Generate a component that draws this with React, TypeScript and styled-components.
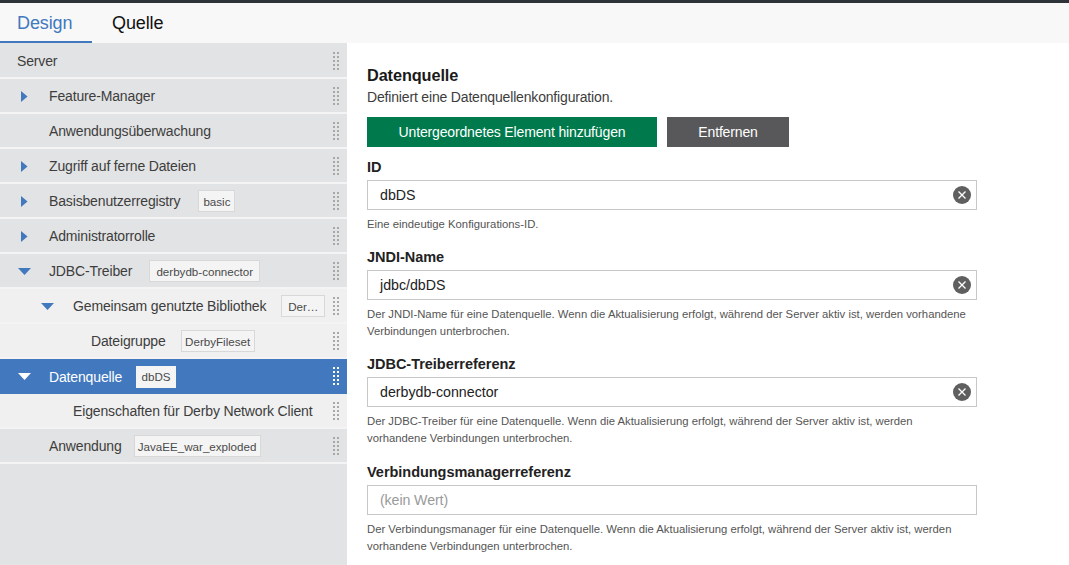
import React from "react";
import styled, { createGlobalStyle } from "styled-components";

const Global = createGlobalStyle`
  html, body { margin: 0; padding: 0; height: 565px; overflow: hidden; background: #fff; }
  body { font-family: "Liberation Sans", Arial, sans-serif; }
  * { box-sizing: border-box; }
`;
const Page = styled.div`
  width: 1069px; height: 565px; display: flex; flex-direction: column; overflow: hidden;
  border-top: 3px solid #2d3339;
`;
const TabBar = styled.div`
  height: 40px; flex: none; display: flex; background: #f8f8f8;
`;
const Tab = styled.div<{ $active?: boolean }>`
  height: 40px; width: ${p => (p.$active ? 92 : 91)}px; padding-left: ${p => (p.$active ? 17 : 20)}px; padding-top: 8px;
  font-size: 18px; line-height: 24px; letter-spacing: -0.12px; color: ${p => (p.$active ? "#4178be" : "#111")};
  border-bottom: 2px solid ${p => (p.$active ? "#4178be" : "transparent")};
`;
const Body = styled.div`
  flex: 1; display: flex; min-height: 0;
`;
const Sidebar = styled.div`
  width: 347px; flex: none; background: #e2e3e4; display: flex; flex-direction: column; padding-top: 1px;
`;
const Row = styled.div<{ $light?: boolean; $selected?: boolean; $indent: number }>`
  height: 35px; flex: none; display: flex; align-items: center; position: relative;
  padding-left: ${p => p.$indent}px; padding-top: ${p => (p.$selected ? 0 : 1)}px;
  font-size: 14px; letter-spacing: -0.15px;
  color: ${p => (p.$selected ? "#fff" : "#3d3d3d")};
  background: ${p => (p.$selected ? "#4178be" : p.$light ? "#f0f0f0" : "#e2e3e4")};
  border-bottom: ${p => (p.$selected ? "0" : "2px solid #f4f4f4")};
`;
const Caret = styled.svg<{ $left: number }>`
  position: absolute; left: ${p => p.$left}px; top: 10px;
`;
const Tag = styled.span<{ $selected?: boolean; $w: number; $ml: number }>`
  margin-left: ${p => p.$ml}px; width: ${p => p.$w}px; height: 22px; display: inline-flex; align-items: center; justify-content: center;
  font-size: 11.6px; letter-spacing: 0; color: #4a4a4a; background: #f4f4f4;
  border: 1px solid ${p => (p.$selected ? "#f4f4f4" : "#d8d8d8")};
  white-space: nowrap;
`;
const Grip = styled.svg`
  position: absolute; right: 8px; top: 8px;
`;
const Main = styled.div`
  flex: 1; padding: 22px 0 0 20px; background: #fff; min-width: 0;
`;
const Title = styled.div`
  font-size: 16.3px; line-height: 20px; font-weight: 700; color: #1a1a1a; letter-spacing: -0.1px;
`;
const Subtitle = styled.div`
  font-size: 14px; line-height: 18px; margin-top: 3px; color: #3d3d3d; letter-spacing: -0.17px;
`;
const Actions = styled.div`
  display: flex; gap: 10px; margin-top: 11px;
`;
const Button = styled.div<{ $w: number; $bg: string }>`
  width: ${p => p.$w}px; height: 30px; background: ${p => p.$bg}; color: #fff;
  display: flex; align-items: center; justify-content: center;
  font-size: 14px; letter-spacing: -0.15px;
`;
const Field = styled.div<{ $gap: number }>`
  width: 610px; margin-top: ${p => p.$gap}px;
`;
const Label = styled.div`
  font-size: 14.5px; line-height: 18px; font-weight: 700; color: #222; letter-spacing: -0.03px;
`;
const InputBox = styled.div<{ $empty?: boolean }>`
  height: 30px; margin-top: 4px; border: 1px solid #c7c7c7; background: #fff; position: relative;
  padding-left: 12px; display: flex; align-items: center;
  font-size: 14.2px; color: ${p => (p.$empty ? "#9a9a9a" : "#222")};
  letter-spacing: ${p => (p.$empty ? "-0.1px" : "0")};
`;
const Clear = styled.svg`
  position: absolute; right: 5px; top: 5px;
`;
const Help = styled.div`
  font-size: 11.3px; line-height: 17px; color: #555; margin-top: 6px;
`;

const GripIcon = ({ color }: { color: string }) => (
  <Grip width="6" height="18" viewBox="0 0 6 18">
    {[0, 1, 2, 3, 4].flatMap(r =>
      [0, 1].map(c => <rect key={`${r}${c}`} x={c * 4} y={r * 4} width="2" height="2" fill={color} />)
    )}
  </Grip>
);
const CaretIcon = ({ open, left, color }: { open: boolean; left: number; color: string }) =>
  open ? (
    <Caret $left={left} width="14" height="14" viewBox="0 0 14 14">
      <path d="M0 4 L13 4 L6.5 11 Z" fill={color} />
    </Caret>
  ) : (
    <Caret $left={left} width="14" height="14" viewBox="0 0 14 14">
      <path d="M3 2 L9.5 7.5 L3 13 Z" fill={color} />
    </Caret>
  );
const ClearIcon = () => (
  <Clear width="18" height="18" viewBox="0 0 18 18">
    <circle cx="9" cy="9" r="9" fill="#5f5f5f" />
    <path d="M5.5 5.5 L12.5 12.5 M12.5 5.5 L5.5 12.5" stroke="#fff" strokeWidth="1.3" />
  </Clear>
);

type R = { text: string; indent: number; caret?: "open" | "closed"; caretLeft?: number; tag?: string; w?: number; ml?: number; light?: boolean; selected?: boolean };
const rows: R[] = [
  { text: "Server", indent: 17 },
  { text: "Feature-Manager", indent: 49, caret: "closed", caretLeft: 18 },
  { text: "Anwendungsüberwachung", indent: 49 },
  { text: "Zugriff auf ferne Dateien", indent: 49, caret: "closed", caretLeft: 18 },
  { text: "Basisbenutzerregistry", indent: 49, caret: "closed", caretLeft: 18, tag: "basic", w: 37, ml: 18 },
  { text: "Administratorrolle", indent: 49, caret: "closed", caretLeft: 18 },
  { text: "JDBC-Treiber", indent: 49, caret: "open", caretLeft: 18, tag: "derbydb-connector", w: 111, ml: 17 },
  { text: "Gemeinsam genutzte Bibliothek", indent: 73, caret: "open", caretLeft: 41, tag: "Der…", w: 44, ml: 15, light: true },
  { text: "Dateigruppe", indent: 91, tag: "DerbyFileset", w: 74, ml: 15, light: true },
  { text: "Datenquelle", indent: 49, caret: "open", caretLeft: 18, tag: "dbDS", w: 40, ml: 14, selected: true },
  { text: "Eigenschaften für Derby Network Client", indent: 73, light: true },
  { text: "Anwendung", indent: 49, tag: "JavaEE_war_exploded", w: 127, ml: 12 },
];

const fields = [
  { label: "ID", value: "dbDS", gap: 11, help: ["Eine eindeutige Konfigurations-ID."] },
  { label: "JNDI-Name", value: "jdbc/dbDS", gap: 15, help: ["Der JNDI-Name für eine Datenquelle. Wenn die Aktualisierung erfolgt, während der Server aktiv ist, werden vorhandene", "Verbindungen unterbrochen."] },
  { label: "JDBC-Treiberreferenz", value: "derbydb-connector", gap: 15, help: ["Der JDBC-Treiber für eine Datenquelle. Wenn die Aktualisierung erfolgt, während der Server aktiv ist, werden", "vorhandene Verbindungen unterbrochen."] },
  { label: "Verbindungsmanagerreferenz", value: "", gap: 16, help: ["Der Verbindungsmanager für eine Datenquelle. Wenn die Aktualisierung erfolgt, während der Server aktiv ist, werden", "vorhandene Verbindungen unterbrochen."] },
];

export default function App() {
  return (
    <Page>
      <Global />
      <TabBar>
        <Tab $active>Design</Tab>
        <Tab>Quelle</Tab>
      </TabBar>
      <Body>
        <Sidebar>
          {rows.map(r => (
            <Row key={r.text} $indent={r.indent} $light={r.light} $selected={r.selected}>
              {r.caret && <CaretIcon open={r.caret === "open"} left={r.caretLeft!} color={r.selected ? "#fff" : "#4178be"} />}
              {r.text}
              {r.tag && <Tag $selected={r.selected} $w={r.w!} $ml={r.ml!}>{r.tag}</Tag>}
              <GripIcon color={r.selected ? "#fff" : "#a8a8a8"} />
            </Row>
          ))}
        </Sidebar>
        <Main>
          <Title>Datenquelle</Title>
          <Subtitle>Definiert eine Datenquellenkonfiguration.</Subtitle>
          <Actions>
            <Button $w={290} $bg="#007a4d">Untergeordnetes Element hinzufügen</Button>
            <Button $w={122} $bg="#58585a">Entfernen</Button>
          </Actions>
          {fields.map(f => (
            <Field key={f.label} $gap={f.gap}>
              <Label>{f.label}</Label>
              <InputBox $empty={!f.value}>
                {f.value || "(kein Wert)"}
                {f.value && <ClearIcon />}
              </InputBox>
              <Help>{f.help.map(h => <div key={h}>{h}</div>)}</Help>
            </Field>
          ))}
        </Main>
      </Body>
    </Page>
  );
}
